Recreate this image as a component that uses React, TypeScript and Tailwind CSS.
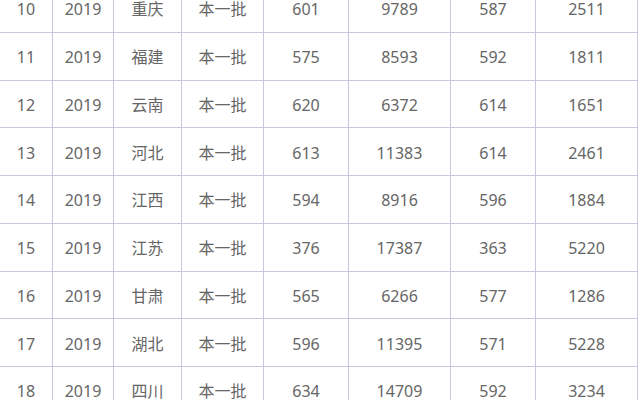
import React from "react";

const rows: string[][] = [
  ["10", "2019", "重庆", "本一批", "601", "9789", "587", "2511"],
  ["11", "2019", "福建", "本一批", "575", "8593", "592", "1811"],
  ["12", "2019", "云南", "本一批", "620", "6372", "614", "1651"],
  ["13", "2019", "河北", "本一批", "613", "11383", "614", "2461"],
  ["14", "2019", "江西", "本一批", "594", "8916", "596", "1884"],
  ["15", "2019", "江苏", "本一批", "376", "17387", "363", "5220"],
  ["16", "2019", "甘肃", "本一批", "565", "6266", "577", "1286"],
  ["17", "2019", "湖北", "本一批", "596", "11395", "571", "5228"],
  ["18", "2019", "四川", "本一批", "634", "14709", "592", "3234"],
];

const App = () => {
  return (
    <div className="w-[640px] h-[400px] overflow-hidden bg-white">
      <div
        className="mt-[-15px] grid grid-cols-[53px_61px_68px_82px_85px_102px_85px_102px] text-[16px] text-[#666]"
        style={{ fontFamily: '"Noto Sans", "Noto Sans CJK SC", sans-serif' }}
      >
        {rows.map((row, i) =>
          row.map((cell, j) => (
            <div
              key={`${i}-${j}`}
              className="h-[47.75px] pt-[2px] flex items-center justify-center border-r border-b border-[#cdc6e0]"
            >
              {cell}
            </div>
          ))
        )}
      </div>
    </div>
  );
};

export default App;
